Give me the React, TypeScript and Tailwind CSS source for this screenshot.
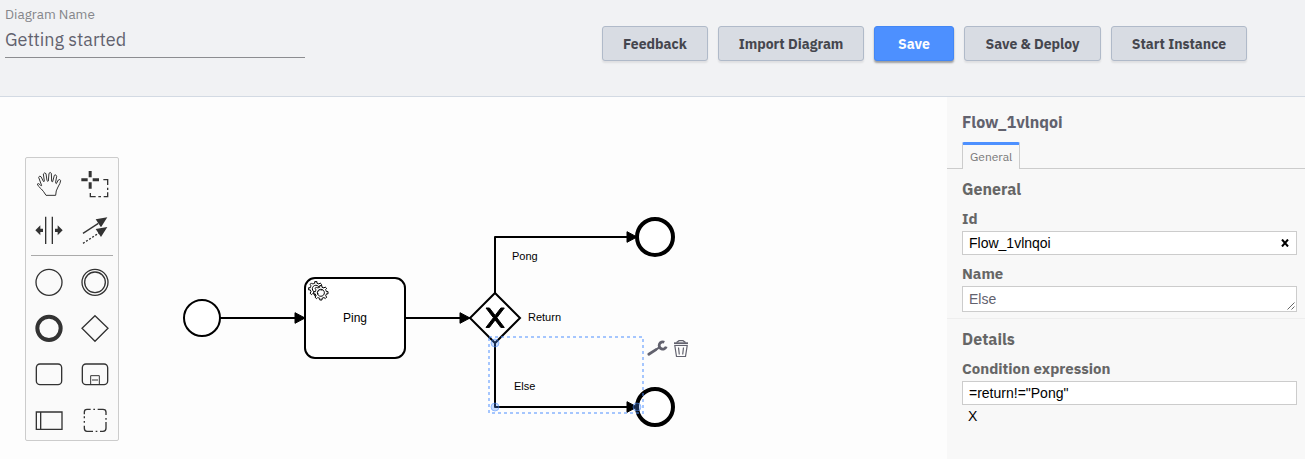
import type { ReactNode } from "react";

function HeaderButton({ className, children }: { className: string; children: ReactNode }) {
  return (
    <button
      className={`h-[35px] shrink-0 rounded-[3px] border text-center text-[14px] font-bold whitespace-nowrap ${className}`}
    >
      <span className="relative top-[0.5px]">{children}</span>
    </button>
  );
}

const GREY = "border-[#b0bac9] bg-[#d8dce3] text-[#45464e] shadow-[0_2px_2px_0_rgba(0,0,0,0.08)]";
const BLUE = "border-[#4387f5] bg-[#4d90ff] text-[#fdfdfe] shadow-[0_2px_2px_0_rgba(0,0,0,0.35)]";

function Header() {
  return (
    <header className="flex h-[97px] shrink-0 justify-between border-b border-[#d3dae3] bg-[#f1f2f4] pr-[58px] pl-[5px]">
      <div className="w-[300px] pt-[6px]">
        <div className="h-[17px] origin-top-left scale-75 text-[18px] leading-[22px] text-[#85868a]">Diagram Name</div>
        <div className="mt-[5px] h-[30px] border-b border-[#8c8d90] text-[18px] leading-[23px] text-[#62626e]">
          Getting started
        </div>
      </div>
      <div className="flex gap-[10px] pt-[26px]">
        <HeaderButton className={`w-[106px] ${GREY}`}>Feedback</HeaderButton>
        <HeaderButton className={`w-[146px] ${GREY}`}>Import Diagram</HeaderButton>
        <HeaderButton className={`w-[80px] ${BLUE}`}>Save</HeaderButton>
        <HeaderButton className={`w-[137px] ${GREY}`}>Save &amp; Deploy</HeaderButton>
        <HeaderButton className={`w-[136px] ${GREY}`}>Start Instance</HeaderButton>
      </div>
    </header>
  );
}

function Tool({ children }: { children: ReactNode }) {
  return (
    <svg className="size-[46px]" viewBox="-69 -69 138 138" fill="none" stroke="#333333" strokeWidth="4">
      {children}
    </svg>
  );
}

function Palette() {
  return (
    <div className="absolute top-[60px] left-[25px] h-[284px] w-[94px] overflow-hidden rounded-[2px] border border-[#cccccc] bg-[#fafafa] pt-[3px]">
      <div className="grid grid-cols-2">
        <Tool>
          <path
            strokeWidth="3"
            strokeLinejoin="round"
            transform="translate(-87 -102)"
            d="M78 136 L107 136 Q107 122 114 111 Q121 100 122 92 Q120 86 115 90 L109 101 Q107 101 107 96 L110 79 Q107 71 103 76 L98 95 Q96 97 95 93 L94 70 Q91 65 87 70 L85 93 Q83 95 81 92 L78 71 Q73 66 70 72 L73 93 Q72 97 70 94 L63 80 Q58 76 56 82 L65 107 Q64 109 61 105 Q55 98 52 102 Q53 108 64 117 Q71 124 78 136 Z"
          />
        </Tool>
        <Tool>
          <path stroke="none" fill="#333" d="M-19 -39 h9 v19 h-9z M-19 -5 h9 v19 h-9z M-41 -17 h19 v9 h-19z M-7 -17 h19 v9 h-19z" />
          <path d="M25 -13 H38 V3 M38 11 v7 M38 25 V38 H26 M18 38 h-8 M2 38 H-14 V27" />
        </Tool>
        <Tool>
          <path d="M-10 -40 V42 M10 -40 V42" />
          <path stroke="none" fill="#333" d="M-41 1 l15 -15 v10 h8 v10 h-8 v10z M41 1 l-15 -15 v10 h-8 v10 h8 v10z" />
        </Tool>
        <Tool>
          <path d="M-36 10 L10 -20" />
          <path d="M-36 40 L15 7" strokeDasharray="6 5" />
          <path stroke="none" fill="#333" d="M37 -38 L18 -8 L2 -32z M37 -9 L18 21 L2 -3z" />
        </Tool>
      </div>
      <div className="mx-[5px] mt-[2px] mb-[3px] h-px bg-[#aaaaaa]" />
      <div className="grid grid-cols-2">
        <Tool>
          <circle r="39" cy="1" />
        </Tool>
        <Tool>
          <circle r="39" cy="1" />
          <circle r="31" cy="1" />
        </Tool>
        <Tool>
          <circle r="35" cy="1" strokeWidth="12" />
        </Tool>
        <Tool>
          <path d="M0 -37 L39 1 L0 40 L-39 1z" />
        </Tool>
        <Tool>
          <rect x="-38" y="-30" width="76" height="62" rx="11" />
        </Tool>
        <Tool>
          <rect x="-38" y="-30" width="76" height="62" rx="11" />
          <path strokeWidth="3" d="M-13 32 V5 H13 V32 M-9 18 H9" />
        </Tool>
        <Tool>
          <path d="M-38 -24 H39 V28 H-38z M-25 -24 V28" />
        </Tool>
        <Tool>
          <path d="M-32 -17 V-24 Q-32 -32 -24 -32 H-13 M-5 -32 h5 M8 -32 H24 Q33 -32 33 -24 V-15 M33 -6 v5 M33 6 V25 Q33 34 24 34 H15 M7 34 h-5 M-6 34 H-24 Q-32 34 -32 25 V17 M-32 8 v-5 M-32 -5 V-11" strokeWidth="4" />
        </Tool>
      </div>
    </div>
  );
}

const GEAR =
  "v -1.71335 c 0.352326,-0.0705 0.703932,-0.17838 1.047628,-0.32133 0.344416,-0.14465 0.665822,-0.32133 0.966377,-0.52145 l 1.19431,1.18005 1.567487,-1.57688 -1.195028,-1.18014 c 0.403376,-0.61394 0.683079,-1.29908 0.825447,-2.01824 l 1.622133,-0.01 v -2.2196 l -1.636514,0.01 c -0.07333,-0.35153 -0.178319,-0.70024 -0.323564,-1.04372 -0.145244,-0.34406 -0.321407,-0.6644 -0.522735,-0.96217 l 1.131035,-1.13631 -1.583305,-1.56293 -1.129598,1.13589 c -0.614052,-0.40108 -1.302883,-0.68093 -2.022633,-0.82247 l 0.0093,-1.61852 h -2.241173 l 0.0042,1.63124 c -0.353763,0.0736 -0.705369,0.17977 -1.049785,0.32371 -0.344415,0.14437 -0.665102,0.32092 -0.9635006,0.52006 l -1.1698628,-1.15823 -1.5667691,1.5792 1.1684265,1.15669 c -0.4026573,0.61283 -0.68308,1.29797 -0.8247287,2.01713 l -1.6588041,0.003 v 2.22174 l 1.6724648,-0.006 c 0.073327,0.35077 0.1797598,0.70243 0.3242851,1.04472 0.1452428,0.34448 0.3214064,0.6644 0.5227339,0.96066 l -1.1993431,1.19723 1.5840256,1.56011 1.1964668,-1.19348 c 0.6140517,0.40346 1.3028827,0.68232 2.0233517,0.82331 l 0.000719,1.69892 h 2.226848 z m 0.221462,-3.9957 c -1.788948,0.7502 -3.8576,-0.0928 -4.6097055,-1.87438 -0.7521065,-1.78321 0.090598,-3.84627 1.8802645,-4.59604 1.78823,-0.74936 3.856881,0.0929 4.608987,1.87437 0.752106,1.78165 -0.0906,3.84612 -1.879546,4.59605 z";

function Diagram() {
  return (
    <svg className="block h-[362px] w-[947px]" viewBox="0 97 947 362" fontFamily='"Liberation Sans", Arial, sans-serif'>
      <g fill="white" stroke="black" strokeWidth="2">
        <circle cx="202" cy="318" r="18" />
        <rect x="305" y="278" width="100" height="80" rx="10" />
        <path d="M495 293 L520 318 L495 343 L470 318z" />
        <circle cx="655" cy="237" r="18" strokeWidth="4" />
        <circle cx="655" cy="407" r="18" strokeWidth="4" />
      </g>
      <g fill="white" stroke="black" strokeWidth="1">
        <path d={`M 317,296 ${GEAR}`} />
        <circle cx="322" cy="294" r="3.6" stroke="none" />
        <path d={`M 322,300 ${GEAR}`} />
      </g>
      <path
        stroke="black"
        d="m 486,308 7.42857,9.71429 -7.42857,9.71428 3.428571,0 5.714286,-7.464 5.714286,7.464 3.42857,0 -7.428571,-9.71428 7.428571,-9.71429 -3.42857,0 -5.714286,7.464 -5.714286,-7.464 z"
      />
      <g fill="none" stroke="black" strokeWidth="2" strokeLinejoin="round">
        <path d="M220 318 H304 M405 318 H469 M495 293 V237 H636 M495 343 V407 H636" />
      </g>
      <path
        stroke="black"
        d="M295 312.7 L305 318 L295 323.3z M460 312.7 L470 318 L460 323.3z M627 231.7 L637 237 L627 242.3z M627 401.7 L637 407 L627 412.3z"
      />
      <g fontSize="12">
        <text x="343" y="322" textLength="24">Ping</text>
      </g>
      <g fontSize="11">
        <text x="512" y="260">Pong</text>
        <text x="528" y="321">Return</text>
        <text x="514" y="390">Else</text>
      </g>
      <rect x="489" y="337" width="154" height="76" fill="none" stroke="#4d90ff" strokeOpacity="0.5" strokeWidth="2" strokeDasharray="3 3" />
      <g fill="#4d90ff" fillOpacity="0.3" stroke="#4d90ff" strokeOpacity="0.5">
        <circle cx="495" cy="343" r="4" />
        <circle cx="495" cy="407" r="4" />
        <circle cx="637" cy="407" r="4" />
      </g>
      <g stroke="#62626e" fill="none">
        <path d="M648.8 354.2 L656 349.6" strokeWidth="2.8" strokeLinecap="round" />
        <path d="M656 349.6 L659.5 347.2" strokeWidth="2" />
        <path d="M664.3 342.2 A3.6 3.6 0 1 0 666.2 346.6" strokeWidth="2.8" />
      </g>
      <g stroke="#62626e" fill="none" strokeWidth="1.2">
        <path d="M674.8 345.5 L676.5 356.5 H685.5 L687.2 345.5z M678.5 347.5 L679.3 354.5 M683.5 347.5 L682.7 354.5" />
        <path d="M674 343.2 H688" strokeWidth="1.8" />
        <path d="M676.5 342.5 L679 340.7 H683 L685.5 342.5" strokeWidth="1.3" />
      </g>
    </svg>
  );
}

const INPUT = "flex items-center border border-[#cccccc] bg-white px-[6px] font-['Liberation_Sans',Arial,sans-serif] text-[14px]";

function PropertiesPanel() {
  return (
    <aside className="flex w-[358px] flex-col bg-[#f8f8f8] text-[#666666]">
      <h1 className="mt-[15px] ml-[15px] h-[20px] text-[16px] leading-[20px] font-bold text-[#62626e]">
        Flow_1vlnqoi
      </h1>
      <div className="mt-[10px] flex h-[27px]">
        <div className="w-[15px] border-b border-[#cccccc]" />
        <div className="w-[58px] rounded-t-[2px] border-x border-t-[3px] border-x-[#cccccc] border-t-[#4d90ff] pt-[3px] pl-[7px] text-[12px] leading-[18px] text-[#777777]">
          General
        </div>
        <div className="flex-1 border-b border-[#cccccc]" />
      </div>
      <section className="h-[150px] border-b border-[#eeeeee] pr-[8px] pl-[15px]">
        <h2 className="pt-[10px] text-[16px] leading-[20px] font-bold">General</h2>
        <label className="mt-[11px] block text-[15px] leading-[18px] font-bold">Id</label>
        <div className={`mt-[3px] h-[24px] justify-between text-black ${INPUT}`}>
          <span>Flow_1vlnqoi</span>
          <svg className="mr-[1px] size-[8px]" viewBox="0 0 8 8" stroke="black" strokeWidth="2">
            <path d="M1 .5 L7 7.5 M7 .5 L1 7.5" />
          </svg>
        </div>
        <label className="mt-[10px] block text-[15px] leading-[18px] font-bold">Name</label>
        <div className={`mt-[3px] h-[26px] justify-between text-[#62626e] ${INPUT}`}>
          <span>Else</span>
          <svg className="-mr-[5px] mb-[1px] size-[8px] self-end" viewBox="0 0 8 8" stroke="#555" strokeWidth="0.9">
            <path d="M0.5 7.5 L7.5 0.5 M4.5 7.5 L7.5 4.5" />
          </svg>
        </div>
      </section>
      <section className="pr-[8px] pl-[15px]">
        <h2 className="pt-[10px] text-[16px] leading-[20px] font-bold">Details</h2>
        <label className="mt-[11px] block text-[15px] leading-[18px] font-bold">Condition expression</label>
        <div className={`mt-[3px] h-[24px] text-black ${INPUT}`}>=return!="Pong"</div>
        <div className="mt-px pl-[6px] font-['Liberation_Sans',Arial,sans-serif] text-[14px] leading-[20px] text-black">X</div>
      </section>
    </aside>
  );
}

export default function App() {
  return (
    <div className="flex h-[459px] w-[1305px] flex-col overflow-hidden font-['IBM_Plex_Sans',Roboto,sans-serif]">
      <Header />
      <main className="flex h-[362px]">
        <div className="relative w-[947px] bg-[#fdfdfd]">
          <Diagram />
          <Palette />
        </div>
        <PropertiesPanel />
      </main>
    </div>
  );
}
